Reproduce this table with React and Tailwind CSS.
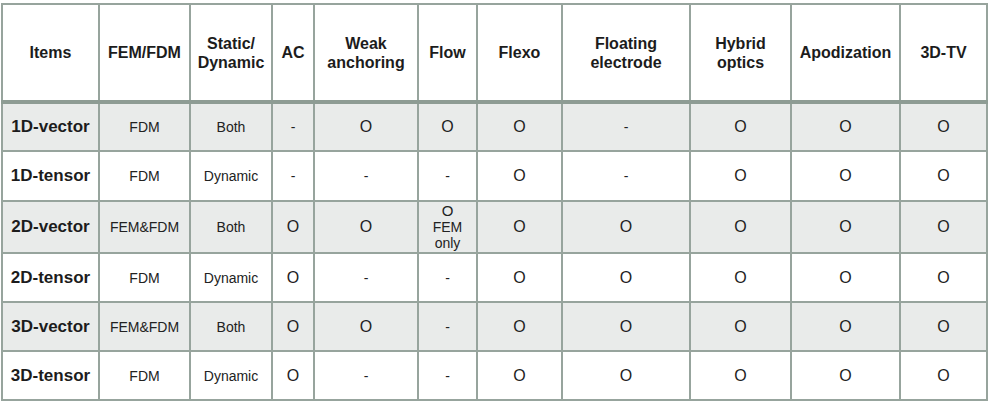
const headers = [
  ['Items'],
  ['FEM/FDM'],
  ['Static/', 'Dynamic'],
  ['AC'],
  ['Weak', 'anchoring'],
  ['Flow'],
  ['Flexo'],
  ['Floating', 'electrode'],
  ['Hybrid', 'optics'],
  ['Apodization'],
  ['3D-TV'],
]

const widths = [97, 91, 82, 42, 104, 59, 85, 128, 101, 109, 87]

const rows = [
  { name: '1D-vector', h: 'h-[49px]', cells: ['FDM', 'Both', '-', 'O', 'O', 'O', '-', 'O', 'O', 'O'] },
  { name: '1D-tensor', h: 'h-[50px]', cells: ['FDM', 'Dynamic', '-', '-', '-', 'O', '-', 'O', 'O', 'O'] },
  { name: '2D-vector', h: 'h-[52px]', cells: ['FEM&FDM', 'Both', 'O', 'O', 'FEM', 'O', 'O', 'O', 'O', 'O'] },
  { name: '2D-tensor', h: 'h-[49px]', cells: ['FDM', 'Dynamic', 'O', '-', '-', 'O', 'O', 'O', 'O', 'O'] },
  { name: '3D-vector', h: 'h-[49px]', cells: ['FEM&FDM', 'Both', 'O', 'O', '-', 'O', 'O', 'O', 'O', 'O'] },
  { name: '3D-tensor', h: 'h-[49px]', cells: ['FDM', 'Dynamic', 'O', '-', '-', 'O', 'O', 'O', 'O', 'O'] },
]

const Cell = ({ value }) => {
  if (value === 'O') return <span className="text-[16px] leading-none text-[#222]">O</span>
  if (value === '-') return <span className="text-[14px] text-[#222]">-</span>
  if (value === 'FEM')
    return (
      <div className="flex flex-col items-center leading-[16px] text-[14px] text-[#222]">
        <span className="text-[15px] leading-[16px]">O</span>
        <span>FEM</span>
        <span>only</span>
      </div>
    )
  return <span className="text-[14px] text-[#222]">{value}</span>
}

export default function App() {
  return (
    <div className="w-[992px] h-[402px] bg-white pt-[3px] pl-[1px]" style={{ fontFamily: '"Liberation Sans", Arial, sans-serif' }}>
      <table className="table-fixed border-collapse w-[987px]">
        <colgroup>
          {widths.map((w, i) => (
            <col key={i} style={{ width: w }} />
          ))}
        </colgroup>
        <thead>
          <tr className="h-[98px]">
            {headers.map((lines, i) => (
              <th
                key={i}
                className="border-2 border-[#97a49d] border-b-[4px] border-b-[#8e9c94] text-center align-middle font-bold text-[16px] leading-[19px] text-[#1c1c1c] p-0"
              >
                {lines.map((l, j) => (
                  <div key={j}>{l}</div>
                ))}
              </th>
            ))}
          </tr>
        </thead>
        <tbody>
          {rows.map((r, i) => (
            <tr key={r.name} className={`${r.h} ${i % 2 === 0 ? 'bg-[#e9ebea]' : 'bg-white'}`}>
              <td className="border-2 border-[#97a49d] text-center align-middle font-bold text-[17px] text-[#1c1c1c] p-0">
                {r.name}
              </td>
              {r.cells.map((c, j) => (
                <td key={j} className="border-2 border-[#97a49d] text-center align-middle p-0">
                  <Cell value={c} />
                </td>
              ))}
            </tr>
          ))}
        </tbody>
      </table>
    </div>
  )
}
